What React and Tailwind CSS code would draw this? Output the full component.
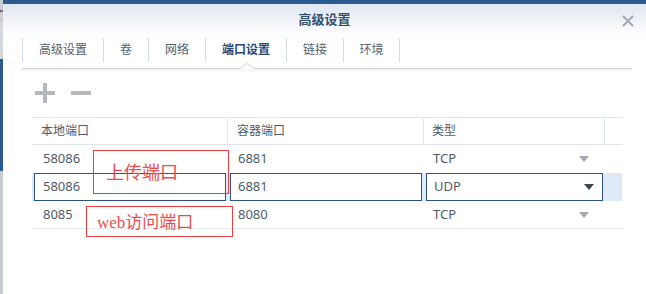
import React from "react";

const ui = { fontFamily: '"Noto Sans", "Noto Sans CJK SC", sans-serif' };
const serif = { fontFamily: '"Liberation Serif", "Noto Sans CJK SC", serif' };

function Caret({ dark }) {
  return (
    <svg width="10" height="6" viewBox="0 0 10 6">
      <path d="M0 0 L10 0 L5 6 Z" fill={dark ? "#3e4652" : "#a3a9b1"} />
    </svg>
  );
}

const tabs = [
  { t: "高级设置", w: "w-[81px]" },
  { t: "卷", w: "w-[45px]" },
  { t: "网络", w: "w-[57px]" },
  { t: "端口设置", w: "w-[81px]", active: true },
  { t: "链接", w: "w-[57px]" },
  { t: "环境", w: "w-[57px]" },
];

export default function App() {
  return (
    <div className="relative flex w-[646px] h-[294px] overflow-hidden bg-white" style={ui}>
      <div className="flex w-[3px] flex-col">
        <div className="h-[10px] bg-[#c9cdd2]" />
        <div className="h-[2px] bg-[#6b6f75]" />
        <div className="h-[10px] bg-[#c9cdd2]" />
        <div className="h-[37px] bg-[#d5d9de]" />
        <div className="h-[112px] bg-[#2c5a92]" />
        <div className="flex-1 bg-[#c9ccd0]" />
      </div>
      <div className="flex flex-1 flex-col">
        <div className="h-[4px] bg-[#2c5a8f]" />
        <div className="relative flex h-[32px] items-center justify-center bg-gradient-to-b from-[#dfe6f0] to-[#ffffff]">
          <span className="text-[13px] font-bold text-[#33506f]">高级设置</span>
          <svg className="absolute right-[12px] top-[11px]" width="12" height="12" viewBox="0 0 12 12">
            <path d="M1 1 L11 11 M11 1 L1 11" stroke="#a2a7ad" strokeWidth="1.8" />
          </svg>
        </div>
        <div className="mt-[2px] ml-[19px] flex h-[24px]">
          {tabs.map((tab, i) => (
            <div
              key={i}
              className={`flex items-center justify-center border-l border-[#d3dbe3] text-[12px] ${tab.w} ${
                i === tabs.length - 1 ? "border-r" : ""
              } ${tab.active ? "font-semibold text-[#27497a]" : "text-[#56606b]"}`}
            >
              {tab.t}
            </div>
          ))}
        </div>
        <div className="relative ml-[19px] mr-[14px] h-[10px]">
          <div className="absolute left-0 right-0 top-[6px] h-[1px] bg-[#d2d5d9]" />
          <div className="absolute left-0 right-0 top-[7px] h-[3px] bg-gradient-to-b from-[#eceef0] to-[#ffffff]" />
          <svg className="absolute left-[218px] top-[1px]" width="14" height="7" viewBox="0 0 14 7">
            <path d="M0 6 L7 0 L14 6 L14 7 L0 7 Z" fill="#ffffff" />
            <path d="M0 5.5 L7 0.5 L14 5.5" fill="none" stroke="#d2d5d9" strokeWidth="1" />
          </svg>
        </div>
        <div className="ml-[32px] mt-[11px] flex h-[20px] items-center gap-[16px]">
          <svg width="20" height="20" viewBox="0 0 20 20">
            <rect x="0" y="8" width="20" height="4" fill="#b5b8bd" />
            <rect x="8" y="0" width="4" height="20" fill="#b5b8bd" />
          </svg>
          <svg width="20" height="20" viewBox="0 0 20 20">
            <rect x="0" y="8" width="20" height="4" fill="#b5b8bd" />
          </svg>
        </div>
        <div className="ml-[29px] mt-[14px] w-[590px] text-[13px] text-[#4f5b68]">
          <div className="flex h-[28px] border-y border-[#dde5ee] text-[12px]">
            <div className="flex w-[196px] items-center border-r border-[#dde5ee] pl-[9px]">本地端口</div>
            <div className="flex w-[196px] items-center border-r border-[#dde5ee] pl-[9px]">容器端口</div>
            <div className="flex w-[181px] items-center border-r border-[#dde5ee] pl-[8px]">类型</div>
            <div className="flex-1" />
          </div>
          <div className="flex h-[28px] items-center">
            <div className="w-[196px] pl-[11px]">58086</div>
            <div className="w-[196px] pl-[10px]">6881</div>
            <div className="flex w-[181px] items-center justify-between pl-[9px] pr-[16px]">
              <span>TCP</span>
              <Caret />
            </div>
          </div>
          <div className="flex h-[28px] items-stretch bg-[#dfeaf9]">
            <div className="ml-[2px] flex w-[192px] items-center border border-[#2d5286] bg-white pl-[8px]">58086</div>
            <div className="ml-[4px] flex w-[192px] items-center border border-[#2d5286] bg-white pl-[7px]">6881</div>
            <div className="ml-[4px] flex w-[177px] items-center justify-between border border-[#2d5286] bg-white pl-[7px] pr-[8px]">
              <span>UDP</span>
              <Caret dark />
            </div>
          </div>
          <div className="flex h-[28px] items-center border-b border-[#e4e9ee]">
            <div className="w-[196px] pl-[11px]">8085</div>
            <div className="w-[196px] pl-[10px]">8080</div>
            <div className="flex w-[181px] items-center justify-between pl-[9px] pr-[16px]">
              <span>TCP</span>
              <Caret />
            </div>
          </div>
        </div>
      </div>
      <div className="absolute left-[93px] top-[150px] flex h-[44px] w-[136px] items-center border border-[#ee3b3b] pl-[12px] pt-[2px]">
        <span className="text-[18px] leading-none text-[#ec4b4b]" style={serif}>上传端口</span>
      </div>
      <div className="absolute left-[86px] top-[206px] flex h-[31px] w-[147px] items-center border border-[#ee3b3b] pl-[10px] pt-[2px]">
        <span className="text-[17px] leading-none text-[#ec4b4b]" style={serif}>web访问端口</span>
      </div>
    </div>
  );
}
